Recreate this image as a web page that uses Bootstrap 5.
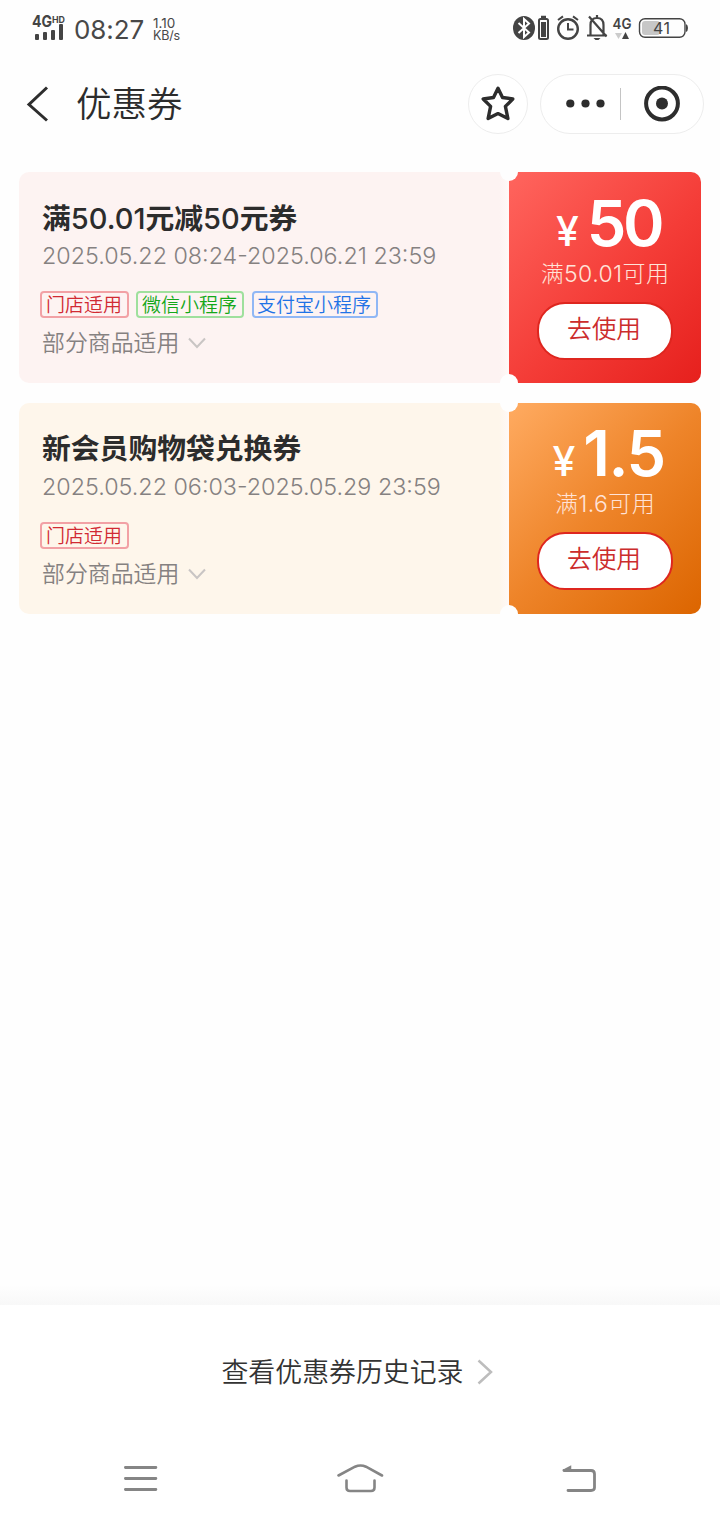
<!DOCTYPE html>
<html lang="zh-CN">
<head>
<meta charset="utf-8">
<meta name="viewport" content="width=device-width, initial-scale=1">
<title>优惠券</title>
<link href="https://cdn.jsdelivr.net/npm/bootstrap@5.3.0/dist/css/bootstrap.min.css" rel="stylesheet">
<style>
body{font-family:Inter,"Noto Sans CJK SC",sans-serif;color:#2c2c2c;background:#fefefe;font-weight:350}
.screen{width:720px;height:1520px}
svg{display:block;flex:none}
.statusbar{height:60px;padding:0 31px 4px 31px;color:#484848}
.net{width:35px;margin-right:8px}
.clock{font-size:26px;letter-spacing:-.1px;font-weight:400;line-height:30px;width:71px;margin-right:8px;padding-top:4px}
.speed{font-size:13.5px;line-height:12px;font-weight:400;padding-top:2px}
.speed span{font-size:12.5px;letter-spacing:-.2px}
.navrow{height:88px;padding:0 16px 0 26px}
.page-title{font-size:35.5px;line-height:44px;margin-left:27px;padding-top:2px;font-weight:350}
.circle-btn{width:60px;height:60px;border:1px solid #ededed;background:#fff}
.capsule{width:164px;height:60px;border:1px solid #ededed;margin-left:12px;background:#fff}
.sep{width:1px;height:32px;background:#c4c4c4;margin-left:15px}
.target{margin-right:23px}
.coupons{padding:24px 19px 0;gap:20px}
.coupon{height:211px;border-radius:10px;overflow:hidden}
.info{width:490px;padding:27px 0 0 21px;background:linear-gradient(90deg,var(--tint) 98%,#fff9f7)}
.red{--tint:#fdf3f2}
.orange{--tint:#fef6eb}
.name{font-size:28.8px;font-weight:600;line-height:38px;margin-left:2px;white-space:nowrap}
.red .name{padding-top:1px;margin-bottom:-1px!important}
.name span{font-weight:500;font-size:29px}
.date{font-size:23.3px;font-weight:300;line-height:38px;color:#858181;margin-left:2px;white-space:nowrap}
.tags{margin-top:16px;gap:7px}
.tag{height:27px;line-height:25px;border:2px solid;border-radius:4px;font-size:19px;padding:0 4px;white-space:nowrap}
.tag-red{color:#d12a33;border-color:#f2a1a5;width:89px}
.tag-green{color:#14a819;border-color:#9fe09d;width:108px;margin-right:1px}
.tag-blue{color:#1f72e6;border-color:#90b7f5;width:126px;padding-left:3px}
.scope{font-size:22.9px;line-height:34px;color:#858181;margin:8px 0 0 2px;gap:9px}
.value{width:192px;color:#fff}
.red .value{background:linear-gradient(135deg,#ff655e,#f43c37 55%,#e6201d)}
.orange .value{background:linear-gradient(135deg,#ffab61,#ee8429 50%,#dc6500)}
.notch{width:18px;height:18px;border-radius:50%;background:#fefefe;left:481px}
.notch-t{top:-9px}.notch-b{bottom:-9px}
.amount{font-size:63px;line-height:64px;height:64px;font-weight:600;margin:19px 0 0 7px;letter-spacing:-3.500px}
.orange .amount{letter-spacing:-1.500px;margin-top:18px}
.amount i{font-style:normal;font-size:41px;margin-right:8px;letter-spacing:0;line-height:1;font-weight:500}
.cond{font-size:23px;font-weight:300;letter-spacing:.4px;line-height:32px;margin-top:3px;color:#ffe3d8}
.use-btn,.use-btn:hover{width:136px;height:58px;border:2px solid #de261f;border-radius:28px;background:#fff;color:#cc2c2c;font-size:24.7px;font-weight:350;line-height:48px;padding:0 2px 4px 0;margin-top:12px}
.fade-edge{height:20px;background:linear-gradient(#fefefe,#f8f8f8)}
.history{height:132px;font-size:26.9px;gap:13px;color:#333;background:#fff;padding:2px 6px 0 0}
.sysnav{height:83px;background:#fff;padding:0 123px}
</style>
</head>
<body>
<main class="screen d-flex flex-column overflow-hidden">
  <div class="statusbar d-flex align-items-center">
    <svg class="net overflow-visible" width="35" height="32" viewBox="0 -2 35 32" fill="#444"><text x="1" y="13" font-size="16" font-weight="700" textLength="20" lengthAdjust="spacingAndGlyphs">4G</text><text x="21" y="8.500" font-size="9" font-weight="700" textLength="13" lengthAdjust="spacingAndGlyphs">HD</text><rect x="4" y="20" width="4" height="6" rx="1"/><rect x="12" y="18" width="4" height="8" rx="1"/><rect x="20" y="16" width="4" height="10" rx="1"/><rect x="28" y="10" width="4" height="16" rx="1"/></svg>
    <div class="clock">08:27</div>
    <div class="speed">1.10<br><span>KB/s</span></div>
    <svg class="ms-auto" width="178" height="28" viewBox="511 14 178 28" fill="none" stroke="#444">
      <ellipse cx="524" cy="28" rx="11" ry="12" fill="#444" stroke="none"/><path d="M518.500 23l10.500 9.500-5 4.500V19l5 4.500-10.500 9.500" stroke="#fff" stroke-width="2"/>
      <rect x="539" y="19" width="9" height="20" rx="1.500" stroke-width="2"/><path d="M541 17h5" stroke-width="2.500"/><path d="M541 22h5v15h-5z" fill="#444" stroke="none"/>
      <circle cx="568" cy="29" r="9.800" stroke-width="2.400"/><path d="M568 23v6.500h5.500M558 20l5-3.600M578 20l-5-3.600" stroke-width="2"/>
      <path d="M590.500 35V25c0-4 2-7 6.500-7s6.500 3 6.500 7v10M587 35.500h20M597 15v3M589 16.500l17.500 20" stroke-width="2.200"/><path d="M593.500 38h7l-2 2h-3z" fill="#444" stroke="none"/>
      <text x="612.500" y="29" font-size="15" font-weight="600" fill="#444" stroke="none" textLength="19" lengthAdjust="spacingAndGlyphs">4G</text><path d="M615 33h7l-3.500 6z" fill="#ccc" stroke="none"/><path d="M622 39h7l-3.500-7z" fill="#444" stroke="none"/>
      <rect x="639.500" y="18.700" width="45.500" height="18.600" rx="5.500" stroke-width="1.400"/><rect x="642" y="21" width="18" height="14" rx="3" fill="#c7c7c7" stroke="none"/><path d="M686 24q2 1 2 4t-2 4z" fill="#444" stroke="none"/>
      <text x="653" y="33.700" font-size="16" font-weight="400" fill="#444" stroke="none" textLength="17">41</text>
    </svg>
  </div>
  <header class="navrow d-flex align-items-center">
    <svg width="23" height="36" viewBox="0 0 23 36" fill="none" stroke="#2d2d2d" stroke-width="3"><path d="M21 1.500L3 18.500l18 16"/></svg>
    <h1 class="page-title mb-0">优惠券</h1>
    <div class="circle-btn rounded-circle d-flex align-items-center justify-content-center ms-auto">
      <svg width="34" height="36" viewBox="0 0 34 36" fill="none" stroke="#2d2d2d" stroke-width="3.400" stroke-linejoin="round"><path d="M17 2.200l4.500 9.300 10.300 1.500-7.400 7.400 2.500 12.200-9.900-5L7.100 32.600l2.500-12.200L2.200 13l10.300-1.500z"/></svg>
    </div>
    <div class="capsule rounded-pill d-flex align-items-center">
      <svg width="40" height="10" class="ms-4" fill="#2d2d2d"><circle cx="5.300" cy="4.500" r="4.100"/><circle cx="20.500" cy="4.500" r="4.100"/><circle cx="35.500" cy="4.500" r="4.100"/></svg>
      <span class="sep"></span>
      <svg class="target ms-auto" width="36" height="36" viewBox="0 0 36 36"><circle cx="18" cy="17.500" r="15.900" fill="none" stroke="#2d2d2d" stroke-width="4"/><circle cx="18" cy="17.500" r="6" fill="#2d2d2d"/></svg>
    </div>
  </header>
  <section class="coupons d-flex flex-column flex-grow-1">
    <article class="coupon red d-flex position-relative">
      <div class="info">
        <h2 class="name mb-0">满<span>50.01</span>元减<span>50</span>元券</h2>
        <div class="date">2025.05.22 08:24-2025.06.21 23:59</div>
        <div class="tags d-flex"><span class="tag tag-red">门店适用</span><span class="tag tag-green">微信小程序</span><span class="tag tag-blue">支付宝小程序</span></div>
        <div class="scope d-flex align-items-center">部分商品适用<svg width="18" height="12" fill="none" stroke="#c9c5c4" stroke-width="2"><path d="M1 1.500l8 8.500 8-8.500"/></svg></div>
      </div>
      <div class="value d-flex flex-column align-items-center">
        <div class="amount"><i>¥</i>50</div>
        <div class="cond">满50.01可用</div>
        <button class="btn use-btn">去使用</button>
      </div>
      <span class="notch notch-t position-absolute"></span><span class="notch notch-b position-absolute"></span>
    </article>
    <article class="coupon orange d-flex position-relative">
      <div class="info">
        <h2 class="name mb-0">新会员购物袋兑换券</h2>
        <div class="date">2025.05.22 06:03-2025.05.29 23:59</div>
        <div class="tags d-flex"><span class="tag tag-red">门店适用</span></div>
        <div class="scope d-flex align-items-center">部分商品适用<svg width="18" height="12" fill="none" stroke="#c9c5c4" stroke-width="2"><path d="M1 1.500l8 8.500 8-8.500"/></svg></div>
      </div>
      <div class="value d-flex flex-column align-items-center">
        <div class="amount"><i>¥</i>1.5</div>
        <div class="cond">满1.6可用</div>
        <button class="btn use-btn">去使用</button>
      </div>
      <span class="notch notch-t position-absolute"></span><span class="notch notch-b position-absolute"></span>
    </article>
  </section>
  <div class="fade-edge"></div>
  <footer class="history d-flex align-items-center justify-content-center">查看优惠券历史记录<svg width="16" height="26" fill="none" stroke="#bdbdbd" stroke-width="2.500"><path d="M1.500 1.500L14 13 1.500 24.500"/></svg></footer>
  <nav class="sysnav d-flex align-items-center justify-content-between" aria-label="系统导航">
    <svg width="35" height="28" fill="none" stroke="#858585" stroke-width="2.800" stroke-linecap="round"><path d="M2.400 2.500h30.500M2.400 13.500h30.500M2.400 24.500h30.500"/></svg>
    <svg width="48" height="30" fill="none" stroke="#858585" stroke-width="2.600" stroke-linecap="round"><path d="M2.500 11.500L19 2.700q5.500-2.500 11 0L46 11.500M10.500 16.500v7q0 3.500 3.500 3.500h21q3.500 0 3.500-3.500v-7"/></svg>
    <svg width="36" height="30" fill="none" stroke="#858585" stroke-width="2.800" stroke-linecap="round"><path d="M3 6.500h27q3.500 0 3.500 3.500v13.500q0 3-3.500 3H7"/><path d="M2 6.500l7.500-4v4z" fill="#858585" stroke-width="1.500"/></svg>
  </nav>
</main>
<script src="https://cdn.jsdelivr.net/npm/bootstrap@5.3.0/dist/js/bootstrap.bundle.min.js"></script>
</body>
</html>
